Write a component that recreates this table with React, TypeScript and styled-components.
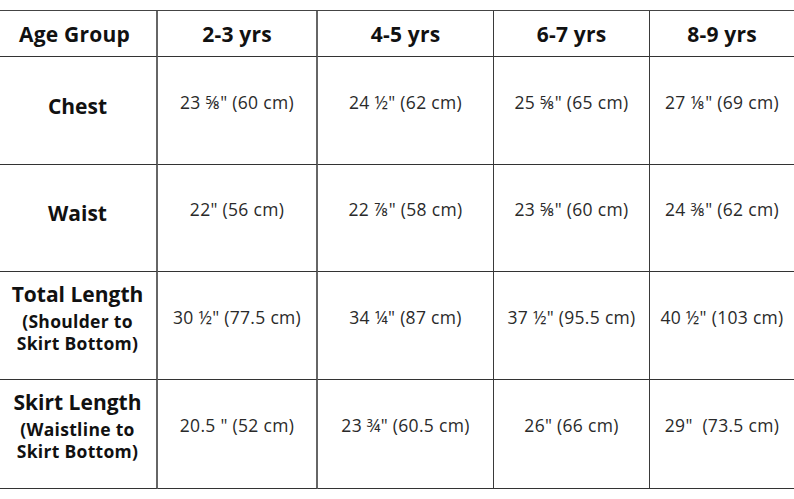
import React from "react";
import styled, { createGlobalStyle } from "styled-components";

const GlobalStyle = createGlobalStyle`
  html, body {
    margin: 0;
    padding: 0;
    background: #ffffff;
    overflow: hidden;
  }
  body {
    font-family: "Open Sans", "Lato", sans-serif;
    color: #1a1a1a;
  }
`;

const Page = styled.div`
  width: 794px;
  height: 499px;
  overflow: hidden;
  padding-top: 10px;
  box-sizing: border-box;
`;

const Table = styled.div`
  margin-left: -7px;
  width: 860px;
  display: grid;
  grid-template-columns: 165px 160px 176px 156px 203px;
  grid-template-rows: 46px 108px 107px 108px 109px;
  border-top: 1px solid #444;
`;

interface CellProps {
  $col: number;
}

const Cell = styled.div<CellProps>`
  box-sizing: border-box;
  display: flex;
  flex-direction: column;
  align-items: center;
  justify-content: center;
  text-align: center;
  white-space: nowrap;
  border-bottom: 1px solid #333;
  border-right: ${({ $col }) =>
    $col < 2 ? "2px solid #666" : "1px solid #3a3a3a"};
`;

const HeadCell = styled(Cell)`
  font-weight: 700;
  font-size: 21px;
  color: #111;
  letter-spacing: 0.2px;
`;

const LastHeadCell = styled(HeadCell)`
  padding-right: 58px;
`;

const LabelCell = styled(Cell)<{ $multi: boolean }>`
  padding-bottom: ${({ $multi }) => ($multi ? "20px" : "10px")};
  padding-left: 6px;
  color: #111;
`;

const DataCell = styled(Cell)<{ $last?: boolean }>`
  padding-bottom: 18px;
  padding-right: ${({ $last }) => ($last ? "58px" : "0")};
  font-size: 17.5px;
  font-weight: 400;
  color: #2a2a2a;
  letter-spacing: 0.3px;
`;

const LabelMain = styled.div`
  font-weight: 700;
  font-size: 21px;
  line-height: 32px;
`;

const LabelSub = styled.div`
  font-weight: 700;
  font-size: 17.5px;
  line-height: 22px;
  letter-spacing: 0.3px;
`;

interface Row {
  label: string;
  sub?: string[];
  values: string[];
}

const ages = ["2-3 yrs", "4-5 yrs", "6-7 yrs", "8-9 yrs"];

const rows: Row[] = [
  {
    label: "Chest",
    values: ['23 ⅝" (60 cm)', '24 ½" (62 cm)', '25 ⅝" (65 cm)', '27 ⅛" (69 cm)'],
  },
  {
    label: "Waist",
    values: ['22" (56 cm)', '22 ⅞" (58 cm)', '23 ⅝" (60 cm)', '24 ⅜" (62 cm)'],
  },
  {
    label: "Total Length",
    sub: ["(Shoulder to", "Skirt Bottom)"],
    values: [
      '30 ½" (77.5 cm)',
      '34 ¼" (87 cm)',
      '37 ½" (95.5 cm)',
      '40 ½" (103 cm)',
    ],
  },
  {
    label: "Skirt Length",
    sub: ["(Waistline to", "Skirt Bottom)"],
    values: [
      '20.5 " (52 cm)',
      '23 ¾" (60.5 cm)',
      '26" (66 cm)',
      '29"\u00a0 (73.5 cm)',
    ],
  },
];

const App: React.FC = () => (
  <>
    <GlobalStyle />
    <Page>
      <Table>
        <HeadCell $col={0}>Age Group</HeadCell>
        {ages.map((age, i) =>
          i === ages.length - 1 ? (
            <LastHeadCell key={age} $col={i + 1}>
              {age}
            </LastHeadCell>
          ) : (
            <HeadCell key={age} $col={i + 1}>
              {age}
            </HeadCell>
          )
        )}
        {rows.map((row) => (
          <React.Fragment key={row.label}>
            <LabelCell $col={0} $multi={!!row.sub}>
              <LabelMain>{row.label}</LabelMain>
              {row.sub?.map((line) => (
                <LabelSub key={line}>{line}</LabelSub>
              ))}
            </LabelCell>
            {row.values.map((value, i) => (
              <DataCell key={i} $col={i + 1} $last={i === row.values.length - 1}>
                {value}
              </DataCell>
            ))}
          </React.Fragment>
        ))}
      </Table>
    </Page>
  </>
);

export default App;
